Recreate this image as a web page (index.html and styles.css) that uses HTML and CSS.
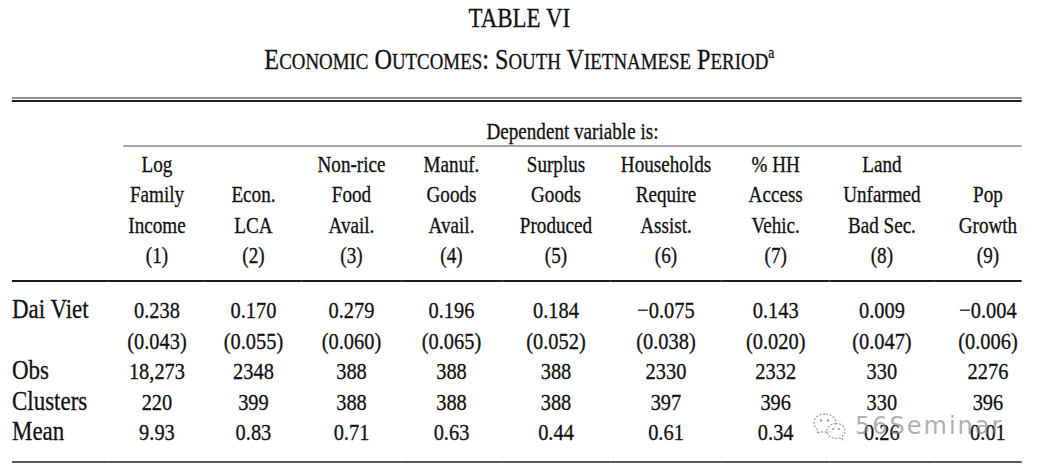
FILE: index.html
```html
<!DOCTYPE html>
<html lang="en">
<head>
<meta charset="utf-8">
<title>Table VI</title>
<link rel="stylesheet" href="styles.css">
</head>
<body>
<div class="frame">
<div class="page">
  <h1 class="title">TABLE VI</h1>
  <h2 class="subtitle">E<span class="sc">conomic</span> O<span class="sc">utcomes</span>: S<span class="sc">outh</span> V<span class="sc">ietnamese</span> P<span class="sc">eriod</span><sup class="note">a</sup></h2>
  <div class="rule-double"></div>
  <table class="results">
    <colgroup>
      <col class="w-stub"><col class="w1"><col class="w2"><col class="w3"><col class="w4"><col class="w5"><col class="w6"><col class="w7"><col class="w8"><col class="w9">
    </colgroup>
    <thead>
      <tr class="dep-row">
        <td></td>
        <td colspan="9"><div class="dep-label">Dependent variable is:</div></td>
      </tr>
      <tr class="head-row">
        <td></td>
        <td>Log<br>Family<br>Income<br>(1)</td>
        <td>Econ.<br>LCA<br>(2)</td>
        <td>Non-rice<br>Food<br>Avail.<br>(3)</td>
        <td>Manuf.<br>Goods<br>Avail.<br>(4)</td>
        <td>Surplus<br>Goods<br>Produced<br>(5)</td>
        <td>Households<br>Require<br>Assist.<br>(6)</td>
        <td>% HH<br>Access<br>Vehic.<br>(7)</td>
        <td>Land<br>Unfarmed<br>Bad Sec.<br>(8)</td>
        <td class="last-col">Pop<br>Growth<br>(9)</td>
      </tr>
    </thead>
    <tbody>
      <tr class="first">
        <td class="stub">Dai Viet</td>
        <td>0.238</td><td>0.170</td><td>0.279</td><td>0.196</td><td>0.184</td><td>−0.075</td><td>0.143</td><td>0.009</td><td class="last-col">−0.004</td>
      </tr>
      <tr>
        <td class="stub"></td>
        <td>(0.043)</td><td>(0.055)</td><td>(0.060)</td><td>(0.065)</td><td>(0.052)</td><td>(0.038)</td><td>(0.020)</td><td>(0.047)</td><td class="last-col">(0.006)</td>
      </tr>
      <tr>
        <td class="stub">Obs</td>
        <td>18,273</td><td>2348</td><td>388</td><td>388</td><td>388</td><td>2330</td><td>2332</td><td>330</td><td class="last-col">2276</td>
      </tr>
      <tr>
        <td class="stub">Clusters</td>
        <td>220</td><td>399</td><td>388</td><td>388</td><td>388</td><td>397</td><td>396</td><td>330</td><td class="last-col">396</td>
      </tr>
      <tr class="last">
        <td class="stub">Mean</td>
        <td>9.93</td><td>0.83</td><td>0.71</td><td>0.63</td><td>0.44</td><td>0.61</td><td>0.34</td><td>0.26</td><td class="last-col">0.01</td>
      </tr>
    </tbody>
  </table>
</div>
</div>
<div class="watermark">
  <svg class="wm-icon" width="36" height="30" viewBox="0 0 36 30" aria-hidden="true">
    <path d="M13 3 C6.5 3 2 7 2 12 C2 15 3.6 17.4 6 19 L5 22.5 L9 20.5 C10.3 21 11.6 21.2 13 21.2 C19.5 21.2 24 17 24 12 C24 7 19.5 3 13 3 Z" fill="rgba(255,255,255,0.6)" stroke="#a0a0a0" stroke-width="1.3" stroke-dasharray="2 1.6"/>
    <path d="M24 12.5 C18.6 12.5 15 16 15 20 C15 24 18.6 27.4 24 27.4 C25.1 27.4 26.1 27.2 27.1 26.9 L30.5 28.6 L29.7 25.6 C31.8 24.2 33 22.2 33 20 C33 16 29.4 12.5 24 12.5 Z" fill="rgba(255,255,255,0.6)" stroke="#a0a0a0" stroke-width="1.3" stroke-dasharray="2 1.6"/>
    <circle cx="9" cy="9.5" r="1.3" fill="#a0a0a0"/>
    <circle cx="16" cy="9.5" r="1.3" fill="#a0a0a0"/>
    <circle cx="21" cy="18" r="1.1" fill="#a0a0a0"/>
    <circle cx="27" cy="18" r="1.1" fill="#a0a0a0"/>
  </svg>
  <span class="wm-text">56Seminar</span>
</div>
</body>
</html>
```
FILE: styles.css
```css
html, body {
  margin: 0;
  padding: 0;
  background: #ffffff;
  overflow: hidden;
}

body {
  position: relative;
  width: 1039px;
  height: 472px;
  font-family: "Liberation Serif", "Times New Roman", serif;
  color: #111111;
}

.frame {
  width: 1039px;
  height: 472px;
  overflow: clip;
}

.page {
  width: 1222px;
  padding: 2.2px 0 0 14.1px;
  box-sizing: border-box;
  transform: scaleX(0.85);
  transform-origin: 0 0;
  -webkit-text-stroke: 0.3px #111111;
}

.title {
  margin: 0 0 0 -14.1px;
  width: 1222px;
  text-align: center;
  font-size: 27px;
  font-weight: normal;
  line-height: 32px;
}

.subtitle {
  margin: 10.2px 0 0 -14.1px;
  width: 1222px;
  text-align: center;
  font-size: 28.5px;
  font-weight: normal;
  line-height: 32px;
}

.sc {
  font-size: 0.78em;
  text-transform: uppercase;
}

.note {
  font-size: 16px;
  line-height: 0;
  vertical-align: 11px;
}

.rule-double {
  width: 1188.2px;
  height: 1px;
  margin-top: 18.6px;
  border-top: 2px solid #8e8e8e;
  border-bottom: 2px solid #1e1e1e;
}

.results {
  width: 1188.2px;
  table-layout: fixed;
  border-collapse: separate;
  border-spacing: 0;
}

.w-stub { width: 114.2px; }
.w1 { width: 112.8px; }
.w2 { width: 114.2px; }
.w3 { width: 116.5px; }
.w4 { width: 118.8px; }
.w5 { width: 127.1px; }
.w6 { width: 131.7px; }
.w7 { width: 126.5px; }
.w8 { width: 123.4px; }
.w9 { width: 103px; }

.results td {
  padding: 0;
  text-align: center;
  white-space: nowrap;
}

.results td.last-col {
  padding-left: 23.1px;
}

.dep-row td {
  font-size: 22.5px;
  vertical-align: bottom;
}

.dep-label {
  margin-left: 16.4px;
  padding-top: 17.5px;
  line-height: 26px;
  text-align: center;
  border-bottom: 2px solid #a4a4a4;
}

.head-row td {
  font-size: 22.5px;
  line-height: 30.5px;
  vertical-align: bottom;
  padding-top: 2.15px;
  padding-bottom: 8.85px;
  border-bottom: 2px solid #1c1c1c;
}

tbody td {
  font-size: 24px;
  line-height: 30.5px;
  vertical-align: baseline;
}

tbody td.stub {
  text-align: left;
  font-size: 27px;
  line-height: 28.5px;
}

tbody tr.first td {
  padding-top: 12.65px;
}

tbody tr.last td {
  padding-bottom: 13.35px;
  border-bottom: 2px solid #585858;
}

.watermark {
  position: absolute;
  left: 812px;
  top: 411px;
  display: flex;
  align-items: center;
  gap: 7px;
  pointer-events: none;
}

.wm-text {
  font-family: "DejaVu Sans", "Liberation Sans", sans-serif;
  font-size: 24px;
  color: rgba(140, 140, 140, 0.7);
  letter-spacing: 2px;
}
```
